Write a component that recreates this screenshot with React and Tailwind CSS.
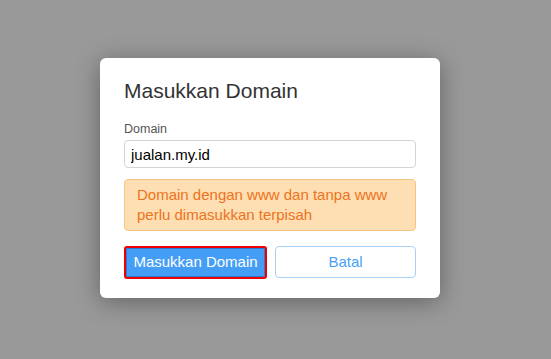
export default function App() {
  return (
    <div
      className="w-[551px] h-[359px] bg-[#999999] flex items-start pl-[100px] pt-[58px]"
      style={{ fontFamily: '"Liberation Sans", Arial, sans-serif' }}
    >
      <div className="w-[340px] bg-white rounded-[6px] shadow-[0_4px_24px_rgba(0,0,0,0.35)] px-6 pt-[20px] pb-[19px]">
        <h2 className="text-[21px] leading-[25px] text-[#333]">Masukkan Domain</h2>

        <label className="block mt-[18px] text-[12.5px] leading-[16px] text-[#555]">Domain</label>
        <input
          className="mt-[3px] w-full h-[28px] border border-[#d4d4d4] rounded-[4px] px-[6px] text-[15px] text-black outline-none"
          defaultValue="jualan.my.id"
        />

        <div className="mt-[11px] bg-[#fddfb3] border border-[#f6c581] rounded-[4px] px-3 py-[5px] text-[15px] leading-[20px] text-[#ee7320]">
          Domain dengan www dan tanpa www
          <br />
          perlu dimasukkan terpisah
        </div>

        <div className="mt-[15px] flex gap-2">
          <button className="flex-1 h-[33px] bg-[#459ef5] text-white text-[15px] border-2 border-[#ee0000] rounded-[3px] shadow-[inset_0_0_0_1px_#2f7bd0]">
            Masukkan Domain
          </button>
          <button className="flex-1 h-[32px] bg-white text-[#4a9ff5] text-[15px] border border-[#a9d1f8] rounded-[4px]">
            Batal
          </button>
        </div>
      </div>
    </div>
  );
}
